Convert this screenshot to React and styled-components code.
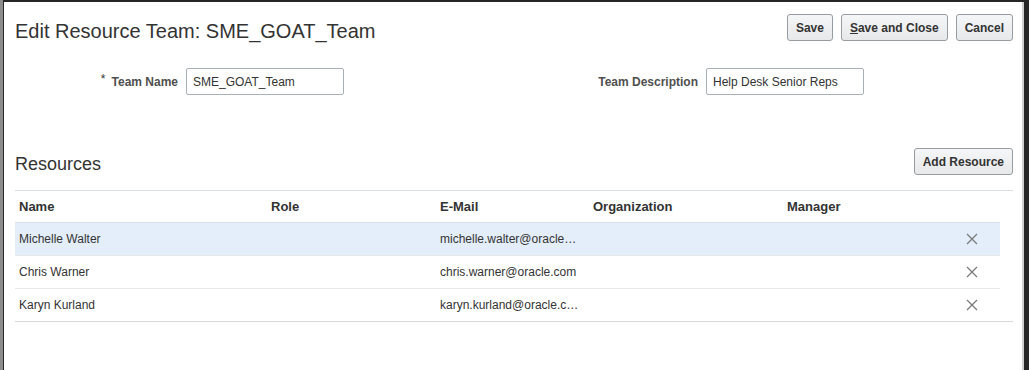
import React from 'react';
import styled, { createGlobalStyle } from 'styled-components';

const GlobalStyle = createGlobalStyle`
  body {
    margin: 0;
    font-family: "Liberation Sans", Arial, sans-serif;
    color: #333;
  }
`;

const Backdrop = styled.div`
  min-height: 100vh;
  box-sizing: border-box;
  padding: 2px 5px 0 4px;
  background: linear-gradient(to right, #8c8c8c 3px, #262626 3px);
`;

const Dialog = styled.div`
  box-sizing: border-box;
  min-height: calc(100vh - 2px);
  background: #fff;
  border-right: 2px solid #cfcfcf;
  padding: 12px 9px 0 11px;
`;

const Header = styled.div`
  display: flex;
  justify-content: space-between;
  align-items: flex-start;
`;

const Title = styled.h1`
  margin: 6px 0 0;
  font-size: 20px;
  font-weight: normal;
  line-height: 23px;
  color: #333;
`;

const ButtonBar = styled.div`
  display: flex;
  gap: 8px;
`;

const Button = styled.button`
  height: 27px;
  padding: 0 8px;
  border: 1px solid #979ca1;
  border-radius: 3px;
  background: linear-gradient(#f5f6f7, #e6e8ea);
  font-family: inherit;
  font-size: 12px;
  font-weight: bold;
  color: #333;
  cursor: pointer;

  u {
    text-decoration: underline;
  }
`;

const FormGrid = styled.div`
  display: grid;
  grid-template-columns: 163px 158px 175px 163px 158px;
  column-gap: 8px;
  align-items: center;
  margin-top: 25px;
`;

const Label = styled.label`
  text-align: right;
  font-size: 12px;
  font-weight: bold;
  color: #4f4f4f;
`;

const Required = styled.span`
  font-weight: normal;
  font-size: 12px;
  line-height: 0;
  color: #333;
  margin-right: 6px;
  vertical-align: 3px;
`;

const Input = styled.input`
  box-sizing: border-box;
  width: 158px;
  height: 27px;
  padding: 0 6px;
  border: 1px solid #a9b0b6;
  border-radius: 2px;
  font-family: inherit;
  font-size: 12px;
  color: #333;
`;

const SectionHeader = styled.div`
  display: flex;
  justify-content: space-between;
  align-items: flex-end;
  margin-top: 53px;
`;

const SectionTitle = styled.h2`
  margin: 0;
  font-size: 18px;
  font-weight: normal;
  line-height: 21px;
  color: #333;
`;

const Table = styled.div`
  margin-top: 15px;
  border-top: 1px solid #dadfe4;
  border-bottom: 1px solid #d6d9dc;
  padding-right: 13px;
`;

const columns = '252px 169px 153px 194px 160px 1fr';

const HeadRow = styled.div`
  display: grid;
  grid-template-columns: ${columns};
  height: 31px;
  align-items: center;
  border-bottom: 1px solid #dadfe4;
`;

const HeadCell = styled.div`
  padding: 0 4px;
  font-size: 13px;
  font-weight: bold;
  color: #333;
`;

const Row = styled.div`
  display: grid;
  grid-template-columns: ${columns};
  height: 32px;
  align-items: center;
  background: ${(p) => (p.$selected ? '#e4eefa' : '#fff')};
  &:not(:last-child) {
    border-bottom: 1px solid #e6e8ea;
  }
`;

const Cell = styled.div`
  padding: 0 10px 0 4px;
  font-size: 12px;
  color: #333;
  white-space: nowrap;
  overflow: hidden;
  text-overflow: ellipsis;
`;

const RemoveCell = styled.div`
  display: flex;
  justify-content: center;
  align-items: center;
`;

const RemoveIcon = () => (
  <svg width="12" height="12" viewBox="0 0 12 12">
    <path d="M1 1 L11 11 M11 1 L1 11" stroke="#7a7a7a" strokeWidth="1.3" fill="none" />
  </svg>
);

const resources = [
  { name: 'Michelle Walter', email: 'michelle.walter@oracle.com', selected: true },
  { name: 'Chris Warner', email: 'chris.warner@oracle.com' },
  { name: 'Karyn Kurland', email: 'karyn.kurland@oracle.com' },
];

export default function App() {
  return (
    <>
      <GlobalStyle />
      <Backdrop>
        <Dialog>
          <Header>
            <Title>Edit Resource Team: SME_GOAT_Team</Title>
            <ButtonBar>
              <Button>Save</Button>
              <Button><u>S</u>ave and Close</Button>
              <Button>Cancel</Button>
            </ButtonBar>
          </Header>

          <FormGrid>
            <Label htmlFor="teamName"><Required>*</Required>Team Name</Label>
            <Input id="teamName" defaultValue="SME_GOAT_Team" />
            <div />
            <Label htmlFor="teamDesc">Team Description</Label>
            <Input id="teamDesc" defaultValue="Help Desk Senior Reps" />
          </FormGrid>

          <SectionHeader>
            <SectionTitle>Resources</SectionTitle>
            <Button>Add Resource</Button>
          </SectionHeader>

          <Table>
            <HeadRow>
              <HeadCell>Name</HeadCell>
              <HeadCell>Role</HeadCell>
              <HeadCell>E-Mail</HeadCell>
              <HeadCell>Organization</HeadCell>
              <HeadCell>Manager</HeadCell>
              <HeadCell />
            </HeadRow>
            {resources.map((r) => (
              <Row key={r.name} $selected={r.selected}>
                <Cell>{r.name}</Cell>
                <Cell />
                <Cell>{r.email}</Cell>
                <Cell />
                <Cell />
                <RemoveCell><RemoveIcon /></RemoveCell>
              </Row>
            ))}
          </Table>
        </Dialog>
      </Backdrop>
    </>
  );
}
